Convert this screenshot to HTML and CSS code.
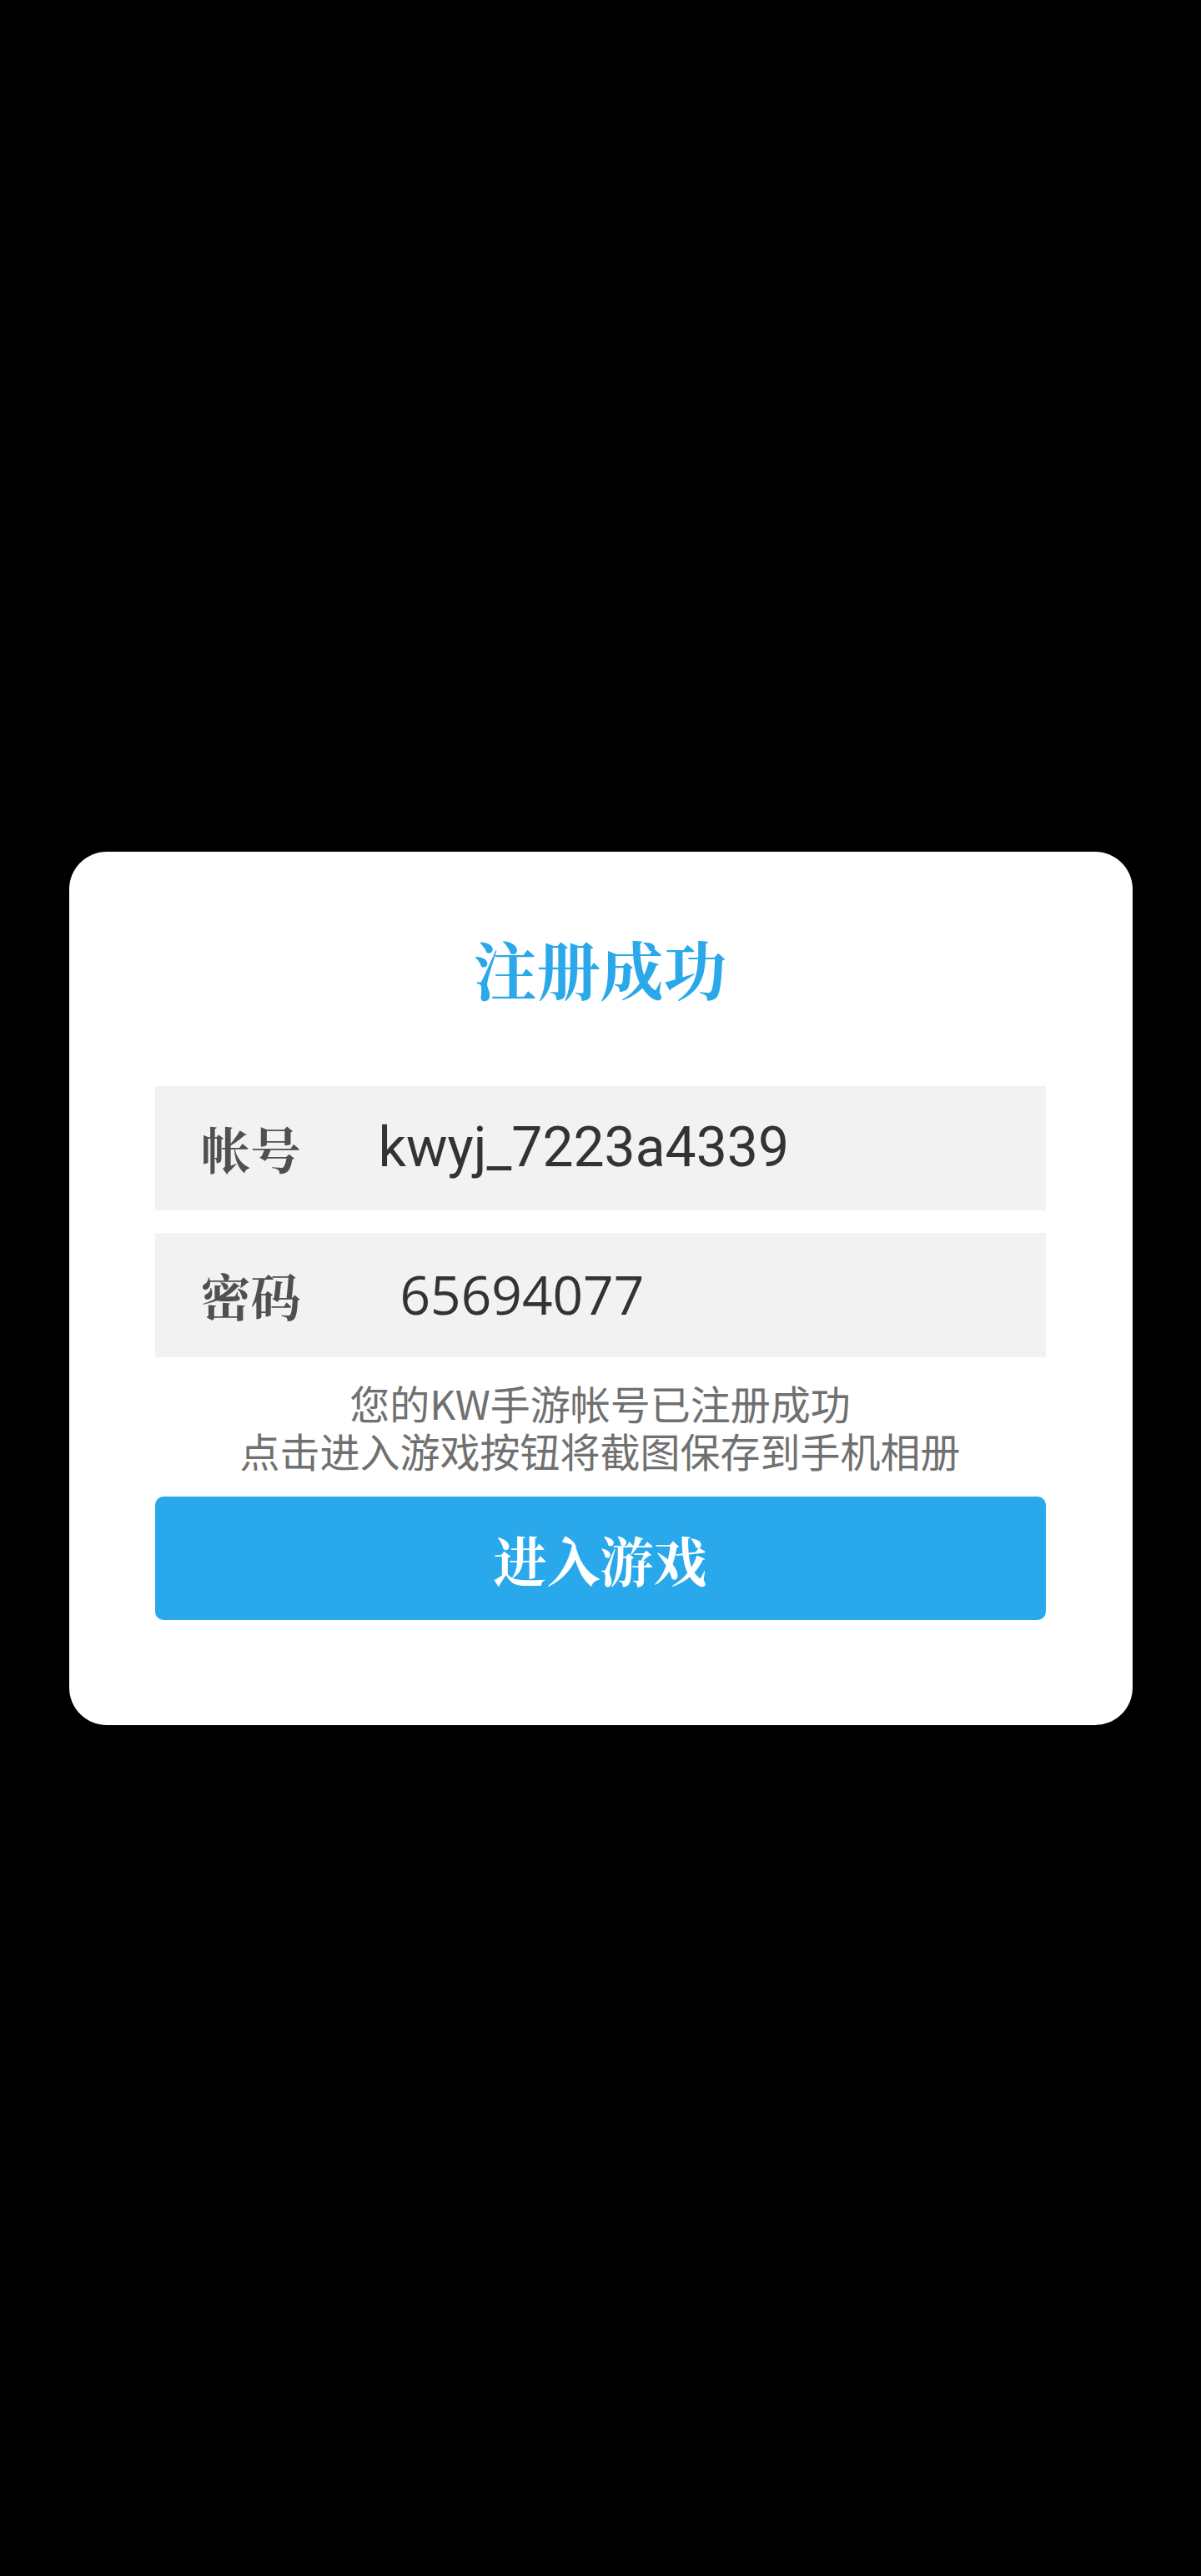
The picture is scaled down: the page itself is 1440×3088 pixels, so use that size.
FILE: index.html
```html
<!DOCTYPE html>
<html lang="zh-CN">
<head>
<meta charset="utf-8">
<title>注册成功</title>
<link rel="stylesheet" href="styles.css">
</head>
<body>
<div class="screen">
  <div class="card">
    <h1 class="title">注册成功</h1>
    <div class="field">
      <span class="label">帐号</span>
      <span class="value value-account">kwyj_7223a4339</span>
    </div>
    <div class="field field-second">
      <span class="label">密码</span>
      <span class="value value-password">65694077</span>
    </div>
    <div class="message">
      <div class="message-line">您的KW手游帐号已注册成功</div>
      <div class="message-line">点击进入游戏按钮将截图保存到手机相册</div>
    </div>
    <div class="button">进入游戏</div>
  </div>
</div>
</body>
</html>
```

FILE: styles.css
```css
html, body {
  margin: 0;
  padding: 0;
  background: #000;
}

.screen {
  min-height: 3088px;
  display: flex;
  align-items: center;
  justify-content: center;
}

.card {
  width: 1275px;
  box-sizing: border-box;
  background: #fff;
  border-radius: 45px;
  padding: 94px 104px 126px 103px;
  display: flex;
  flex-direction: column;
}

.title {
  margin: 0;
  text-align: center;
  font-family: "Noto Serif CJK SC", "Noto Sans CJK SC", serif;
  font-weight: 700;
  font-size: 76px;
  line-height: 91px;
  color: #2aa8e9;
}

.field {
  margin-top: 96px;
  height: 149px;
  background: #f2f2f2;
  display: flex;
  align-items: center;
  padding-left: 55px;
}

.field-second {
  margin-top: 27px;
}

.label {
  font-family: "Noto Serif CJK SC", "Noto Sans CJK SC", serif;
  font-weight: 700;
  font-size: 60px;
  line-height: 1;
  color: #505050;
  width: 122px;
  flex: none;
}

.value {
  font-size: 66px;
  line-height: 1;
  color: #333;
}

.value-account {
  font-family: Roboto, "Liberation Sans", sans-serif;
  margin-left: 91px;
}

.value-password {
  font-family: "Open Sans", "Noto Sans", sans-serif;
  font-size: 64px;
  margin-left: 117px;
}

.message {
  margin-top: 26px;
  text-align: center;
  font-family: "Noto Sans CJK SC", sans-serif;
  font-size: 48px;
  line-height: 57px;
  color: #707070;
}

.message-line {
  height: 57px;
}

.button {
  margin-top: 27px;
  height: 148px;
  border-radius: 10px;
  background: #29a9eb;
  color: #fff;
  display: flex;
  align-items: center;
  justify-content: center;
  font-family: "Noto Serif CJK SC", "Noto Sans CJK SC", serif;
  font-weight: 700;
  font-size: 64px;
}
```
